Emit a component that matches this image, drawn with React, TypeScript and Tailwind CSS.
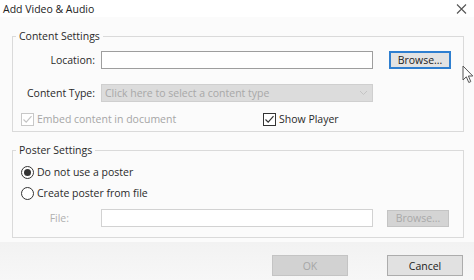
import React from "react";

const font = { fontFamily: '"Open Sans", "Noto Sans", sans-serif' };

function Check({ disabled }: { disabled?: boolean }) {
  const c = disabled ? "#c4c4c4" : "#333333";
  return (
    <span
      className={`flex h-[13px] w-[13px] items-center justify-center border bg-white ${
        disabled ? "border-[#c8c8c8]" : "border-[#333333]"
      }`}
    >
      <svg width="11" height="11" viewBox="0 0 11 11">
        <path d="M1.5 5.5 L4.2 8.2 L9.5 2.2" fill="none" stroke={c} strokeWidth="1.2" />
      </svg>
    </span>
  );
}

function Radio({ checked }: { checked?: boolean }) {
  return (
    <span className="flex h-[13px] w-[13px] items-center justify-center rounded-full border border-[#333333] bg-white">
      {checked && <span className="h-[7px] w-[7px] rounded-full bg-[#333333]" />}
    </span>
  );
}

export default function App() {
  return (
    <div
      className="flex h-[280px] w-[474px] flex-col overflow-hidden bg-[#fbfbfb] text-[10.5px] leading-[16px] text-[#1a1a1a]"
      style={font}
    >
      {/* title bar */}
      <div className="flex h-[17px] items-center justify-between bg-white pl-[3px] pr-[7px]">
        <span className="text-[10.5px] text-[#222]">Add Video &amp; Audio</span>
        <svg width="11" height="10" viewBox="0 0 11 10" className="mt-[1px]">
          <path d="M1 0.5 L10 9.5 M10 0.5 L1 9.5" stroke="#555" strokeWidth="1.1" />
        </svg>
      </div>

      <div className="relative flex flex-col pl-[12px] pr-[10px] pt-[11px]">
        {/* Content Settings */}
        <fieldset className="border border-[#dadada] px-0 pb-[4px]">
          <legend className="ml-[3px] px-[3px] leading-[16px] text-[#2a2a2a]">Content Settings</legend>
          <div className="mt-[7px] flex h-[18px] items-center">
            <span className="w-[83px] pr-[1px] text-right text-[#2a2a2a]">Location:</span>
            <div className="ml-[5px] h-[18px] w-[272px] border border-[#9e9e9e] bg-white" />
            <button className="ml-[16px] flex h-[18px] w-[62px] items-center justify-center border-2 border-[#2f7fd0] bg-[#e3e3e3] text-[#222]">
              Browse...
            </button>
          </div>
          <div className="mt-[15px] flex h-[18px] items-center">
            <span className="w-[83px] pr-[1px] text-right text-[#2a2a2a]">Content Type:</span>
            <div className="ml-[5px] flex h-[18px] w-[272px] items-center justify-between border border-[#cfcfcf] bg-[#dcdcdc] pl-[3px] pr-[4px] text-[#a8a8a8]">
              <span>Click here to select a content type</span>
              <svg width="9" height="6" viewBox="0 0 9 6">
                <path d="M1 1 L4.5 4.5 L8 1" fill="none" stroke="#c4c4c4" strokeWidth="1" />
              </svg>
            </div>
          </div>
          <div className="mt-[9px] flex h-[16px] items-center">
            <span className="ml-[8px] flex w-[242px] items-center gap-[3px] text-[#a6a6a6]">
              <Check disabled />
              Embed content in document
            </span>
            <span className="flex items-center gap-[3px] text-[#2a2a2a]">
              <Check />
              Show Player
            </span>
          </div>
        </fieldset>

        {/* Poster Settings */}
        <fieldset className="mt-[10px] border border-[#dadada] px-0 pb-[10px]">
          <legend className="ml-[3px] px-[3px] leading-[16px] text-[#2a2a2a]">Poster Settings</legend>
          <div className="mt-[6px] flex h-[16px] items-center gap-[3px] pl-[8px] text-[#2a2a2a]">
            <Radio checked />
            Do not use a poster
          </div>
          <div className="mt-[5px] flex h-[16px] items-center gap-[3px] pl-[8px] text-[#2a2a2a]">
            <Radio />
            Create poster from file
          </div>
          <div className="mt-[8px] flex h-[18px] items-center">
            <span className="w-[56px] text-right text-[#b0b0b0]">File:</span>
            <div className="ml-[32px] h-[18px] w-[272px] border border-[#d2d2d2] bg-white" />
            <button className="ml-[14px] flex h-[17px] w-[62px] items-center justify-center border border-[#c4c4c4] bg-[#d4d4d4] text-[#a9a9a9]">
              Browse...
            </button>
          </div>
        </fieldset>

        {/* mouse cursor */}
        <svg
          width="12"
          height="19"
          viewBox="0 0 12 19"
          className="absolute left-[462px] top-[48px]"
        >
          <path
            d="M1 1 L1 15 L4.3 11.8 L6.8 17.5 L8.8 16.6 L6.4 11 L10.8 11 Z"
            fill="#ffffff"
            stroke="#555"
            strokeWidth="1"
            strokeLinejoin="round"
          />
        </svg>
      </div>

      {/* footer */}
      <div className="mt-[4px] flex flex-1 items-start justify-end gap-[39px] bg-gradient-to-b from-[#f2f2f2] to-[#f7f7f7] pr-[11px] pt-[13px]">
        <button className="flex h-[21px] w-[76px] items-center justify-center border border-[#c4c4c4] bg-[#d2d2d2] text-[#a6a6a6]">
          OK
        </button>
        <button className="flex h-[21px] w-[76px] items-center justify-center border border-[#acacac] bg-[#e1e1e1] text-[#222]">
          Cancel
        </button>
      </div>
    </div>
  );
}
